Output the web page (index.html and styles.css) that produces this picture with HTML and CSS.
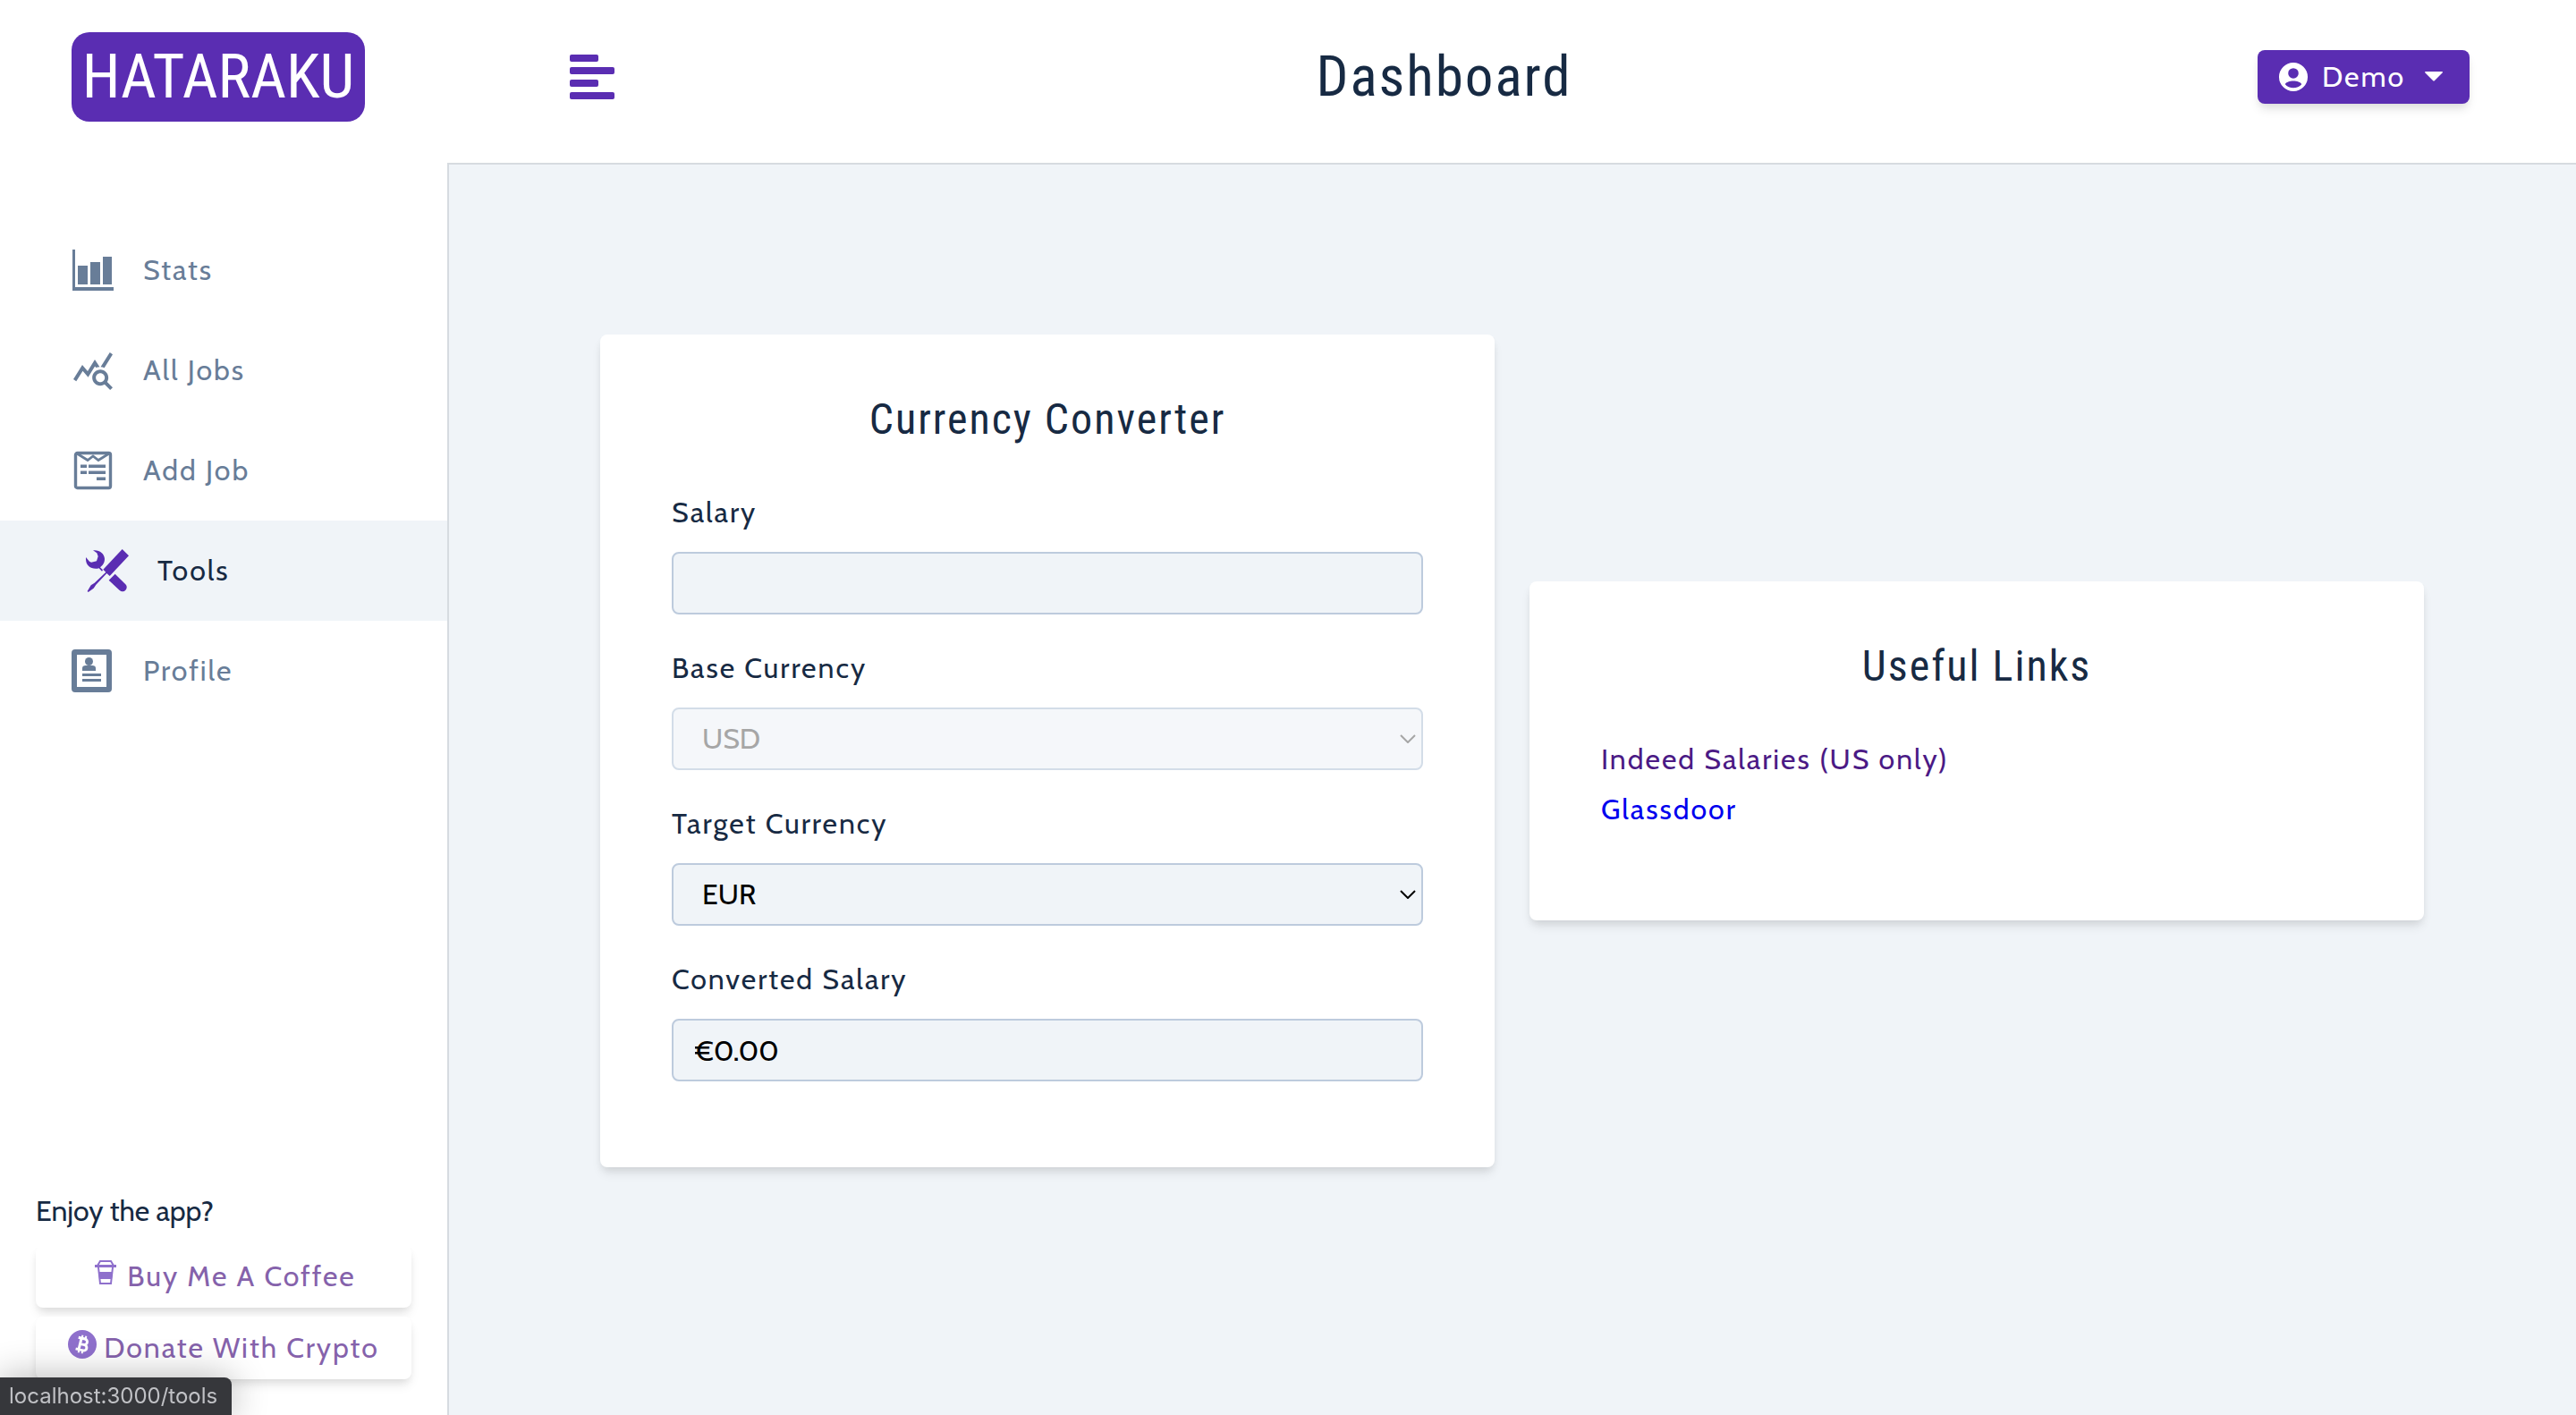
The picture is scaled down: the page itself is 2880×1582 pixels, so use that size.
FILE: index.html
```html
<!DOCTYPE html>
<html lang="en">
<head>
<meta charset="utf-8">
<title>Hataraku</title>
<meta name="viewport" content="width=device-width, initial-scale=1">
<link rel="stylesheet" href="styles.css">
</head>
<body>
<div class="app">
  <aside class="sidebar">
    <header class="sidebar-head">
      <a class="logo" href="#">HATARAKU</a>
    </header>
    <nav class="nav-links">
      <a class="nav-link" href="#stats">
        <svg class="nav-icon" viewBox="0 0 48 48"><path d="M1 1h3v42h43v4H1zM7 19h11v21H7zM21 15h11v25H21zM35 9h10v31H35z"/></svg>
        Stats
      </a>
      <a class="nav-link" href="#jobs">
        <svg class="nav-icon" viewBox="0 0 24 24"><path d="M19.88 18.47c.44-.7.7-1.51.7-2.39 0-2.49-2.01-4.5-4.5-4.5s-4.5 2.01-4.5 4.5 2.01 4.5 4.49 4.5c.88 0 1.7-.26 2.39-.7L21.58 23 23 21.58l-3.12-3.11zm-3.8.11c-1.38 0-2.5-1.12-2.5-2.5s1.12-2.5 2.5-2.5 2.5 1.12 2.5 2.5-1.12 2.5-2.5 2.5zm-.36-8.5c-.74.02-1.45.18-2.1.45l-.55-.83-3.8 6.18-3.01-3.52-3.63 5.81L1 17l5-8 3 3.5L13 6l2.72 4.08zm2.59.5c-.64-.28-1.33-.45-2.05-.49L21.38 2 23 3.18l-4.67 7.4z"/></svg>
        All Jobs
      </a>
      <a class="nav-link" href="#add">
        <svg class="nav-icon" viewBox="0 0 48 48"><rect x="4.500" y="4.500" width="39" height="39" rx="2" fill="none" stroke="currentColor" stroke-width="3.400"/><path d="M6 5l12 7.500 6-4.500 6 4.500 12-7.500" fill="none" stroke="currentColor" stroke-width="2.800"/><path d="M10 17.500h7v3.500h-7zM19 17.500h19v3.500H19zM10 24.500h7v3.500h-7zM19 24.500h19v3.500H19zM28 31.500h10v3.500H28z"/></svg>
        Add Job
      </a>
      <a class="nav-link active" href="#tools" aria-current="page">
        <svg class="nav-icon" viewBox="0 0 144 144"><path d="M122 0l22 22-64 68-10-9-36 38-8 12-18 13-3-3 12-20 12-8 38-36-9-9zM24 4c20-3 38 10 39 28 0 8-2 13-5 18l-2 3-8 8 9 9-3 4-10-10c-22 6-44-6-44-30v-7l12 14 6 3 18-4 5-16-4-11zM98 83l35 35c12 12-5 33-20 20l-36-34z"/></svg>
        Tools
      </a>
      <a class="nav-link" href="#profile">
        <svg class="nav-icon" viewBox="0 0 48 48"><path fill-rule="evenodd" d="M4 0h37a4 4 0 0 1 4 4v40a4 4 0 0 1-4 4H4a4 4 0 0 1-4-4V4a4 4 0 0 1 4-4zM6 6v36h33V6z"/><circle cx="19.500" cy="13.500" r="4.500"/><path d="M12 24v-3q0-3 4-3h7q4 0 4 3v3zM12 27h21v3H12zM12 33h21v3H12z"/></svg>
        Profile
      </a>
    </nav>
    <footer class="support">
      <p class="support-title">Enjoy the app?</p>
      <a class="support-btn" href="#coffee">
        <svg class="support-icon" viewBox="-4 -2 32 32"><path fill="none" stroke="currentColor" stroke-width="2" d="M3 6l3-5h12l3 5M4 8l2 18h12l2-18"/><path d="M0 5h24v3H0zM4 13h16l-1 8H5z"/></svg>
        Buy Me A Coffee
      </a>
      <a class="support-btn" href="#crypto">
        <svg class="support-icon" viewBox="0 0 32 32"><circle cx="16" cy="16" r="16"/><g transform="rotate(14 16 16)" fill="none" stroke="#fff" stroke-width="3"><path d="M10 9.500h7.500a3 3 0 0 1 0 6.500H13h5.500a3.200 3.200 0 0 1 0 6.500H10M13.500 9v14"/><path stroke-width="2" d="M14 6v4M18 6v4M14 22v4M18 22v4"/></g></svg>
        Donate With Crypto
      </a>
    </footer>
  </aside>

  <div class="page">
    <header class="navbar">
      <button class="toggle" type="button" aria-label="Toggle sidebar">
        <svg class="toggle-icon" viewBox="0 0 50 50"><rect width="32" height="8" rx="2"/><rect y="14" width="50" height="8" rx="2"/><rect y="28" width="32" height="8" rx="2"/><rect y="42" width="50" height="8" rx="2"/></svg>
      </button>
      <h1 class="navbar-title">Dashboard</h1>
      <button class="user-btn" type="button">
        <svg class="user-icon" viewBox="0 0 94 94"><path fill-rule="evenodd" d="M47 0a47 47 0 1 0 0 94a47 47 0 1 0 0-94zM47 18a17 17 0 1 1 0 34a17 17 0 1 1 0-34zM20 71c6-14 48-14 54 0c-12 16-42 16-54 0z"/></svg>
        Demo
        <svg class="caret-icon" viewBox="0 0 20 12"><path d="M1 0h18q2 0 0 2l-8 8q-1 1-2 0L1 2q-2-2 0-2z"/></svg>
      </button>
    </header>

    <main class="content">
      <form class="card">
        <h2 class="card-title">Currency Converter</h2>
        <div class="field">
          <label for="salary">Salary</label>
          <input class="control" id="salary" type="text">
        </div>
        <div class="field">
          <label for="base">Base Currency</label>
          <div class="select-wrap disabled">
            <select class="control" id="base" disabled><option>USD</option></select>
            <svg class="chevron" viewBox="0 0 18 10"><path d="M1 1l8 8 8-8"/></svg>
          </div>
        </div>
        <div class="field">
          <label for="target">Target Currency</label>
          <div class="select-wrap">
            <select class="control" id="target"><option>EUR</option></select>
            <svg class="chevron" viewBox="0 0 18 10"><path d="M1 1l8 8 8-8"/></svg>
          </div>
        </div>
        <div class="field">
          <label for="converted">Converted Salary</label>
          <input class="control" id="converted" type="text" value="€0.00" readonly>
        </div>
      </form>
      <section class="card">
        <h2 class="card-title">Useful Links</h2>
        <ul class="links">
          <li><a class="visited" href="#indeed">Indeed Salaries (US only)</a></li>
          <li><a href="#glassdoor">Glassdoor</a></li>
        </ul>
      </section>
    </main>
  </div>
</div>
<div class="status-bubble">localhost:3000/tools</div>
</body>
</html>
```
FILE: styles.css
```css
:root {
  --primary: #5a2db2;
  --ink: #172a43;
  --muted: #687d98;
  --surface: #f0f4f8;
  --line: #d6dbe0;
  --field-line: #bdcbdd;
  --body-font: Cabin, Lato, sans-serif;
  --head-font: "Roboto Condensed", Roboto, sans-serif;
  --shadow: 0 8px 12px -2px rgba(0, 0, 0, .1), 0 4px 8px -2px rgba(0, 0, 0, .06);
}

* { box-sizing: border-box; }

body {
  margin: 0;
  background: var(--surface);
  color: var(--ink);
  font: 32px/48px var(--body-font);
}

svg { fill: currentColor; flex: none; }
a { text-decoration: none; }

.app {
  display: grid;
  grid-template-columns: 500px 1fr;
  min-height: 100vh;
}

/* Sidebar */
.sidebar {
  display: flex;
  flex-direction: column;
  background: #fff;
}

.sidebar-head { padding: 36px 80px 110px; }

.logo {
  display: block;
  width: 328px;
  border-radius: 20px;
  background: var(--primary);
  color: #fff;
  font: 69px/100px var(--head-font);
  text-align: center;
}

.nav-link {
  display: flex;
  align-items: center;
  gap: 32px;
  padding: 32px 0 32px 80px;
  color: var(--muted);
  letter-spacing: 2px;
}

.nav-link.active {
  padding-left: 96px;
  background: var(--surface);
  color: var(--ink);
}

.nav-icon { width: 48px; height: 48px; }
.active .nav-icon { color: var(--primary); }

.support {
  display: flex;
  flex-direction: column;
  gap: 10px;
  margin-top: auto;
  padding: 0 40px 40px;
}

.support-title { margin: 0; padding-bottom: 4px; }

.support-btn {
  display: flex;
  align-items: center;
  justify-content: center;
  gap: 8px;
  height: 70px;
  border-radius: 8px;
  background: #fff;
  box-shadow: var(--shadow);
  color: #8562ab;
  letter-spacing: 2px;
}

.support-icon {
  width: 32px;
  height: 32px;
  margin-bottom: 8px;
  color: #8f70cc;
}

/* Top bar */
.page { border-left: 2px solid var(--line); }

.navbar {
  display: flex;
  align-items: center;
  justify-content: space-between;
  height: 184px;
  margin-left: -2px;
  padding: 0 5% 10px;
  border-bottom: 2px solid var(--line);
  background: #fff;
}

.toggle {
  display: flex;
  padding: 16px 18px;
  border: 0;
  background: none;
  color: var(--primary);
}

.toggle-icon { width: 50px; height: 50px; }

.navbar-title {
  margin: 0;
  font: 63px/80px var(--head-font);
  letter-spacing: 2px;
}

.user-btn {
  display: flex;
  align-items: center;
  height: 60px;
  padding: 0 30px 0 24px;
  border: 0;
  border-radius: 8px;
  background: var(--primary);
  box-shadow: var(--shadow);
  color: #fff;
  font: 32px/48px var(--body-font);
  letter-spacing: 2px;
}

.user-icon { width: 32px; height: 32px; margin-right: 16px; }
.caret-icon { width: 20px; height: 12px; margin-left: 22px; }

/* Cards */
.content {
  display: flex;
  align-items: center;
  gap: 39px;
  padding: 190px 170px 0 169px;
}

.card {
  flex: 1;
  min-width: 0;
  padding: 64px 80px 96px;
  border-radius: 8px;
  background: #fff;
  box-shadow: var(--shadow);
}

.card-title {
  margin: 0 0 45px;
  font: 48px/62px var(--head-font);
  letter-spacing: 2px;
  text-align: center;
}

.field + .field { margin-top: 32px; }

.field label {
  display: block;
  margin-bottom: 16px;
  line-height: 56px;
  letter-spacing: 2px;
}

.control {
  display: block;
  width: 100%;
  height: 70px;
  padding: 0 24px;
  border: 2px solid var(--field-line);
  border-radius: 8px;
  background: var(--surface);
  color: #000;
  font: 32px/48px var(--body-font);
  appearance: none;
}

select.control { padding: 0 32px; }

.select-wrap { position: relative; }
.select-wrap.disabled { opacity: .65; }

.chevron {
  position: absolute;
  top: 30px;
  right: 8px;
  width: 18px;
  height: 10px;
  fill: none;
  stroke: #000;
  stroke-width: 2px;
}

.disabled .control { opacity: 1; color: #777; }
.disabled .chevron { stroke: #777; }

.links {
  margin: 0;
  padding: 0;
  line-height: 56px;
  letter-spacing: 2px;
  list-style: none;
}

.links a { color: #0000ee; }
.links .visited { color: #4b1a85; }

/* Browser link preview */
.status-bubble {
  position: fixed;
  bottom: 0;
  left: 0;
  padding: 0 16px 0 10px;
  border-radius: 0 8px 0 0;
  background: #36373b;
  box-shadow: 0 0 40px rgba(0, 0, 0, .3);
  color: #c0c1c5;
  font: 24px/42px Inter, sans-serif;
}
```
